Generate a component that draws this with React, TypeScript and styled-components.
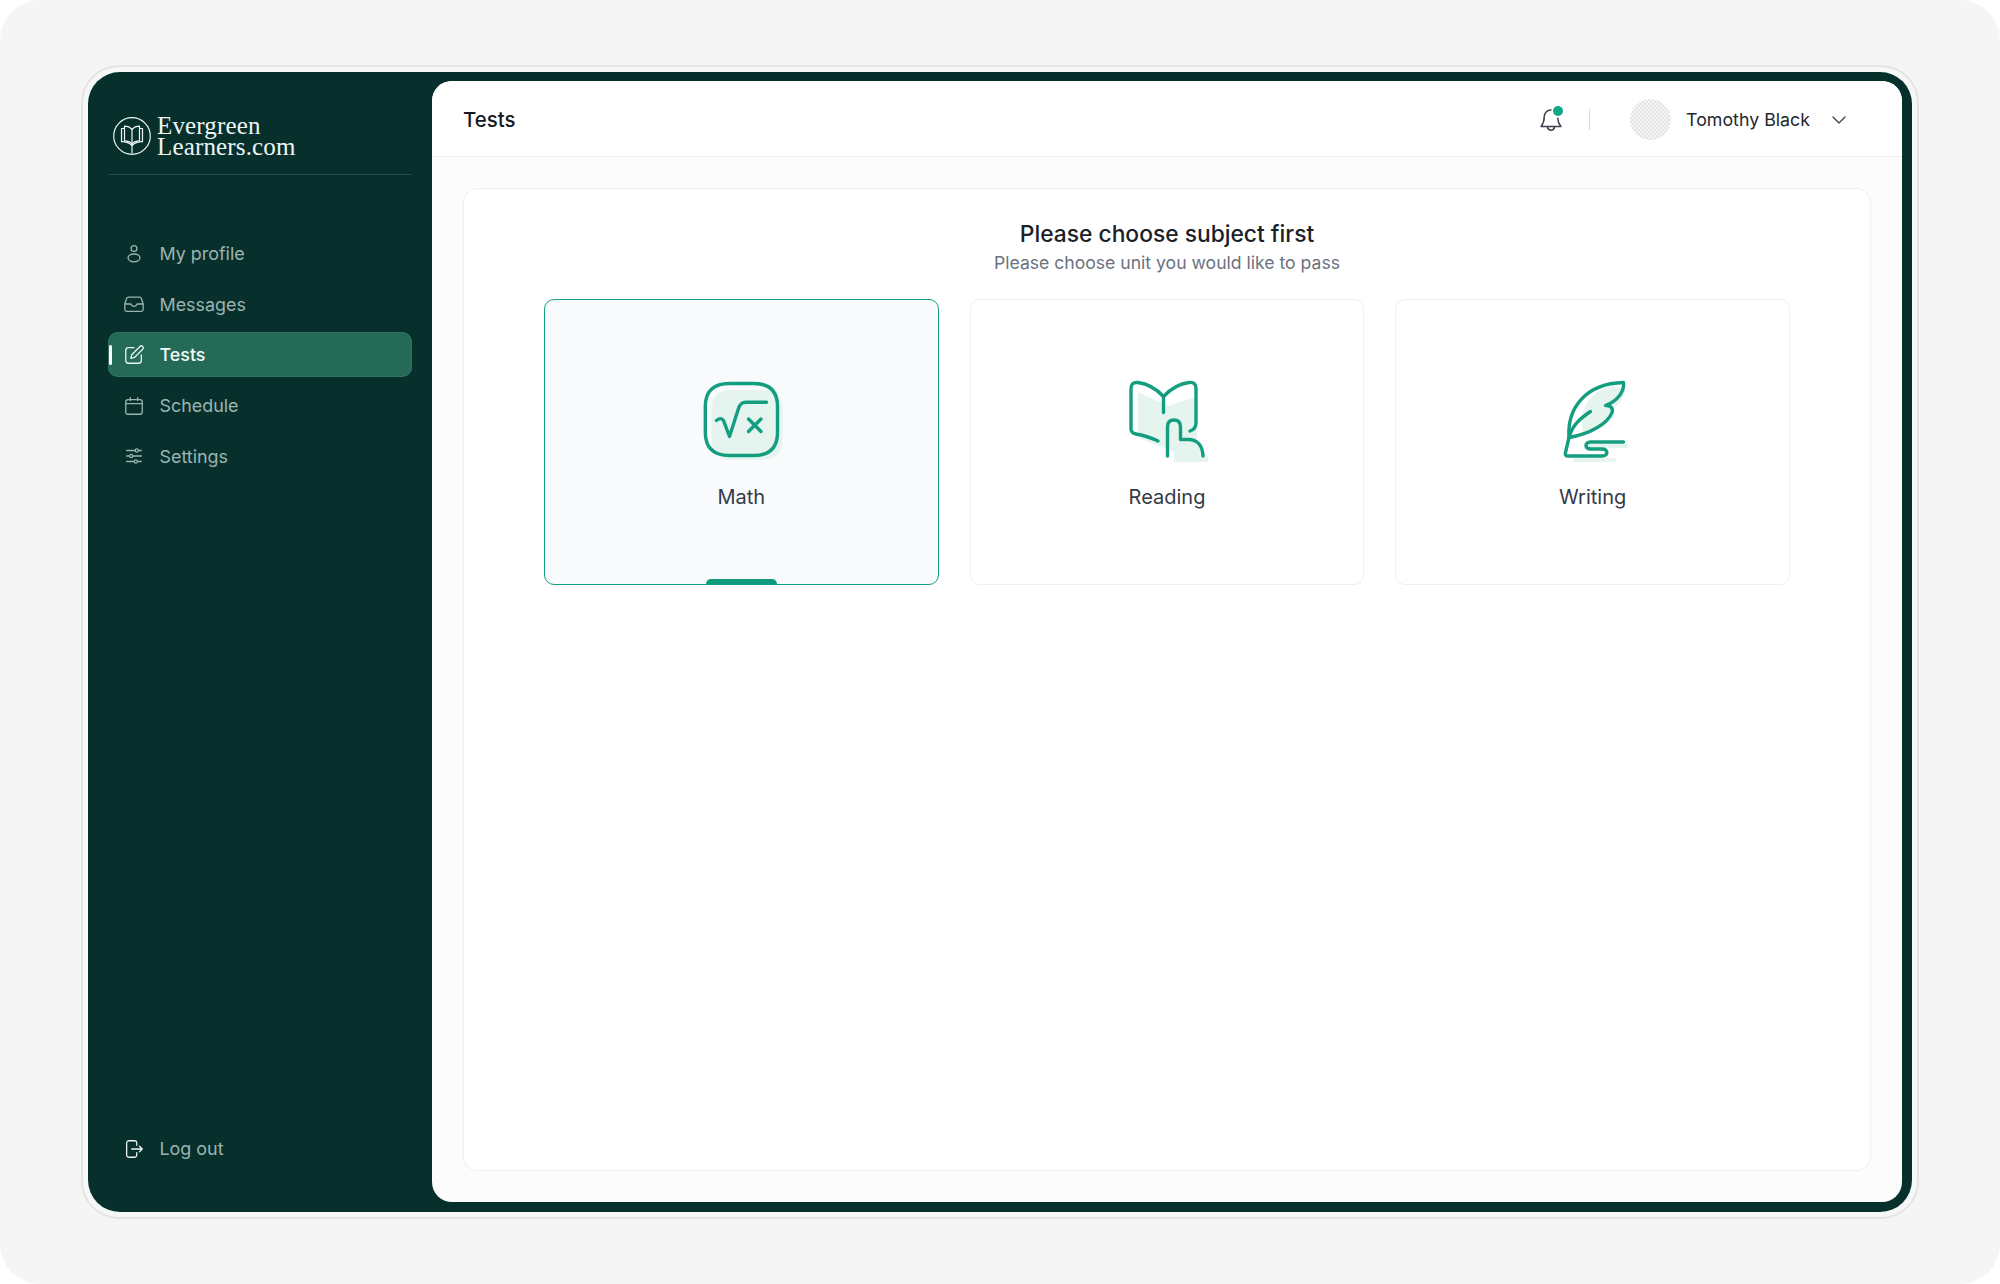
import React from "react";
import styled, { createGlobalStyle } from "styled-components";

const Global = createGlobalStyle`
  html, body { margin: 0; padding: 0; background: #ffffff; }
  * { box-sizing: border-box; }
  body { font-family: "Inter", "Liberation Sans", sans-serif; }
`;

const Page = styled.div`
  width: 2000px;
  height: 1284px;
  padding: 65px 81px;
  background: #f5f5f5;
  border-radius: 40px;
`;

const Frame = styled.div`
  height: 1154px;
  padding: 5px;
  border: 2px solid #e6e4e3;
  border-radius: 38px;
  background: #f6f7f7;
`;

const Shell = styled.div`
  display: flex;
  height: 100%;
  padding: 9px 10px 10px 0;
  background: #07302d;
  border-radius: 32px;
`;

const Sidebar = styled.aside`
  display: flex;
  flex-direction: column;
  flex: 0 0 344px;
  padding: 34px 20px 31px;
  width: 344px;
`;

const Brand = styled.div`
  display: flex;
  align-items: center;
  gap: 6px;
  padding: 0 5px 17px;
  border-bottom: 1px solid rgba(255, 255, 255, 0.13);
`;

const BrandName = styled.div`
  font-family: "Liberation Serif", serif;
  font-size: 25px;
  line-height: 21px;
  letter-spacing: 0.15px;
  color: #eef5f3;
`;

const NavList = styled.nav`
  display: flex;
  flex-direction: column;
  gap: 5.7px;
  margin-top: 56px;
`;

const NavItem = styled.div<{ $active?: boolean }>`
  position: relative;
  display: flex;
  align-items: center;
  gap: 14.5px;
  height: 45px;
  padding-left: 15px;
  border-radius: 10px;
  font-size: 17.9px;
  font-weight: ${(p) => (p.$active ? 500 : 400)};
  color: ${(p) => (p.$active ? "#f2fbf8" : "#9cb4b1")};
  background: ${(p) => (p.$active ? "#256a56" : "transparent")};
  box-shadow: ${(p) => (p.$active ? "inset 0 0 0 1px #2d7562" : "none")};
  svg { flex: none; color: ${(p) => (p.$active ? "#e6f5f0" : "#9cb4b1")}; }
`;

const ActiveBar = styled.span`
  position: absolute;
  left: 1px;
  top: 13px;
  width: 3px;
  height: 20px;
  background: #ffffff;
  border-radius: 2px;
`;

const LogOut = styled(NavItem)`
  margin-top: auto;
  svg { color: #eef5f3; }
`;

const Main = styled.main`
  flex: 1;
  display: flex;
  flex-direction: column;
  min-width: 0;
  background: #fcfcfd;
  border-radius: 20px;
  overflow: hidden;
`;

const Header = styled.header`
  display: flex;
  align-items: center;
  flex: 0 0 76px;
  padding: 2px 54px 0 31px;
  background: #ffffff;
  border-bottom: 1px solid #efefef;
`;

const PageTitle = styled.h1`
  flex: 1;
  margin: 0;
  font-size: 20.4px;
  font-weight: 500;
  color: #14181f;
`;

const BellWrap = styled.div`
  position: relative;
  width: 28px;
  height: 28px;
  color: #3c4250;
`;

const Dot = styled.span`
  position: absolute;
  top: 0;
  right: 2px;
  width: 10px;
  height: 10px;
  border-radius: 50%;
  background: #10a884;
`;

const VDivider = styled.span`
  width: 1px;
  height: 21px;
  margin: 0 40px 0 24.5px;
  background: #d8dadd;
`;

const Avatar = styled.div`
  width: 41px;
  height: 41px;
  border-radius: 50%;
  background-color: #f2f2f2;
  background-image: conic-gradient(#e4e4e4 25%, #f6f6f6 0 50%, #e4e4e4 0 75%, #f6f6f6 0);
  background-size: 4px 4px;
`;

const UserName = styled.span`
  margin-left: 15px;
  font-size: 17.8px;
  color: #23272f;
`;

const Chevron = styled.span`
  display: flex;
  margin-left: 20px;
  color: #4a4f5b;
`;

const Content = styled.div`
  flex: 1;
  padding: 32px 32px 32px;
  min-height: 0;
`;

const Card = styled.section`
  height: 100%;
  padding: 30px 80px 0;
  background: #ffffff;
  border-radius: 14px;
  box-shadow: 0 0 0 1px #f0f0f0, 0 1px 4px rgba(0, 0, 0, 0.02);
`;

const Heading = styled.h2`
  margin: 0;
  text-align: center;
  font-size: 22.8px;
  line-height: 30px;
  font-weight: 500;
  color: #1a1f29;
`;

const SubHeading = styled.p`
  margin: 1.5px 0 0;
  text-align: center;
  font-size: 17.6px;
  line-height: 24px;
  color: #6b7280;
`;

const Subjects = styled.div`
  display: grid;
  grid-template-columns: repeat(3, 1fr);
  gap: 31px;
  margin-top: 24.5px;
`;

const Subject = styled.div<{ $active?: boolean }>`
  position: relative;
  display: flex;
  flex-direction: column;
  align-items: center;
  height: 286px;
  padding-top: 78px;
  border-radius: 10px;
  border: 1px solid ${(p) => (p.$active ? "#12a182" : "#eeeff1")};
  background: ${(p) => (p.$active ? "#f8fafc" : "#ffffff")};
  font-size: 20px;
  color: #343a46;
  overflow: hidden;
`;

const SubjectLabel = styled.span`
  margin-top: 17px;
  line-height: 24px;
`;

const Tab = styled.span`
  position: absolute;
  bottom: 0;
  left: 50%;
  width: 71px;
  height: 5px;
  margin-left: -35.5px;
  background: #109a7d;
  border-radius: 5px 5px 0 0;
`;

const GREEN = "#129e7f";
const PALE = "#e6f4f0";

const Ico: React.FC<{ children: React.ReactNode; size?: number }> = ({ children, size = 22 }) => (
  <svg width={size} height={size} viewBox="0 0 24 24" fill="none" stroke="currentColor" strokeWidth="1.4" strokeLinecap="round" strokeLinejoin="round">
    {children}
  </svg>
);

const UserIcon = () => (
  <Ico>
    <circle cx="12" cy="6" r="3.200" />
    <path d="M12 12c-3.600 0-6.500 1.800-6.500 4.200S8.400 20.500 12 20.500s6.500-1.900 6.500-4.300S15.600 12 12 12z" />
  </Ico>
);
const InboxIcon = () => (
  <Ico>
    <path d="M6 4.500h12c1.200 0 1.800.8 2.200 1.800L22 12v6a2 2 0 0 1-2 2H4a2 2 0 0 1-2-2v-6l1.800-5.700C4.200 5.300 4.800 4.500 6 4.500z" />
    <path d="M2.500 12H8c.6 0 .9.4 1.100.9.4 1 1.400 1.600 2.900 1.600s2.500-.6 2.900-1.600c.2-.5.5-.9 1.100-.9h5.500" />
  </Ico>
);
const PenIcon = () => (
  <Ico>
    <path d="M12 4H6a3 3 0 0 0-3 3v11a3 3 0 0 0 3 3h11a3 3 0 0 0 3-3v-6" />
    <path d="M18.500 2.700a2.100 2.100 0 0 1 3 3L12.500 14.700l-4 1 1-4z" />
  </Ico>
);
const CalendarIcon = () => (
  <Ico>
    <rect x="3" y="5" width="18" height="16" rx="2.500" />
    <path d="M3 9.500h18M8 2.800V6M16 2.800V6" />
  </Ico>
);
const SlidersIcon = () => (
  <Ico>
    <path d="M4 6h9M17 6h3M4 12h3M11 12h9M4 18h8M16 18h4" />
    <circle cx="15" cy="6" r="1.700" />
    <circle cx="9" cy="12" r="1.700" />
    <circle cx="14" cy="18" r="1.700" />
  </Ico>
);
const LogOutIcon = () => (
  <Ico>
    <path d="M15 8V5.500A2.500 2.500 0 0 0 12.500 3H6.500A2.500 2.500 0 0 0 4 5.500v13A2.500 2.500 0 0 0 6.500 21h6a2.500 2.500 0 0 0 2.500-2.500V16" />
    <path d="M9.500 12H21M18 9l3 3-3 3" />
  </Ico>
);
const BellIcon = () => (
  <svg width="28" height="28" viewBox="0 0 24 24" fill="none" stroke="currentColor" strokeWidth="1.300" strokeLinecap="round" strokeLinejoin="round">
    <path d="M12 3.500c-3.400 0-5.800 2.600-5.800 5.800 0 4.500-1.200 6.300-2.700 8.200h17c-1.500-1.900-2.700-3.700-2.700-7" />
    <path d="M9 18c.3 1.700 1.500 2.700 3 2.700s2.700-1 3-2.700" />
  </svg>
);

const Logo = () => (
  <svg width="38" height="38" viewBox="0 0 38 38" fill="none" stroke="#eef5f3" strokeWidth="1.200" strokeLinecap="round" strokeLinejoin="round">
    <circle cx="19" cy="19" r="18.300" />
    <path d="M19 12.500c-2-2.200-4.800-3.300-7.500-3.300v14.600c3.200 0 5.600.9 7.500 3 1.900-2.100 4.300-3 7.500-3V9.200c-2.700 0-5.500 1.100-7.500 3.300z" />
    <path d="M19 12.500v14.300M11.500 11.500H8.500v13.200c3.500-.2 7 .6 10.500 3.800 3.500-3.200 7-4 10.500-3.800V11.500h-3" />
    <path d="M19 27v9" />
  </svg>
);

const MathIcon = () => (
  <svg width="90" height="90" viewBox="-3.500 0 90 90" fill="none">
    <path d="M32 12h30c14 0 21 7 21 21v27c0 15-7 22-21 22H32c-14 0-20-7-20-22V33c0-14 6-21 20-21z" fill={PALE} />
    <path d="M30 5.500h24c16 0 24 7.500 24 23v26c0 15.500-8 23-24 23H30c-16 0-24.200-7.500-24.200-23v-26c0-15.500 8.200-23 24.200-23z" stroke={GREEN} strokeWidth="3.400" />
    <path d="M17 42.500c3-2.500 5.500-2.500 7 0L30 58.500 38.500 32c1.500-5.500 3.500-7.700 8-7.700H67" stroke={GREEN} strokeWidth="3.400" strokeLinecap="round" strokeLinejoin="round" />
    <path d="M49 41l12.500 12.500M61.500 41L49 53.500" stroke={GREEN} strokeWidth="3.400" strokeLinecap="round" />
  </svg>
);

const ReadingIcon = () => (
  <svg width="90" height="90" viewBox="-3 0 90 90" fill="none">
    <path d="M13 14l31 14 28-10v49l11 11v6H49V74L13 60z" fill={PALE} />
    <path d="M33 63c-6-3-14-5.500-22-7-3.500-.7-5-2-5-5V11c0-5 2-7 7-6.500 8 1 18 6 25.500 14 7.500-8 17-13 25.500-14 5-.5 7 1.500 7 6.500V45c0 4-1.500 6.500-6 8" stroke={GREEN} strokeWidth="3.400" strokeLinecap="round" strokeLinejoin="round" />
    <path d="M38.500 18.500V34.500" stroke={GREEN} strokeWidth="3.400" strokeLinecap="round" />
    <path d="M42.500 78V49c0-4.500 2.500-7 6.500-7s6.500 2.500 6.500 7v12.500h8c8.500 0 14 5.500 14.500 16.500" stroke={GREEN} strokeWidth="3.400" strokeLinecap="round" strokeLinejoin="round" />
  </svg>
);

const WritingIcon = () => (
  <svg width="90" height="90" viewBox="-12.500 0 90 90" fill="none">
    <path d="M22 50c-3-16 4-36 30-42l13 3c-1 8-6 16-13 19 3 3 3 6 1 10-6 8-18 12-31 14z" fill={PALE} />
    <path d="M14 82h40M30 68h36" stroke={PALE} strokeWidth="4" strokeLinecap="round" />
    <path d="M8.500 59.500C6.500 30 25 5.500 63 4.500c1 9-6 18.500-18 23 5.500 0 8 3 6.500 7C47 46 29 56 8.500 59.500z" stroke={GREEN} strokeWidth="3.400" strokeLinejoin="round" />
    <path d="M8.500 59.500C12 47 19 41 30 33.500" stroke={GREEN} strokeWidth="3.400" strokeLinecap="round" />
    <path d="M63 64H30c-6 0-6 7 0 7h11.500c6.500 0 6.500 7 0 7H7c-2 0-2.500-1.500-2-3.500L8.500 59.500" stroke={GREEN} strokeWidth="3.400" strokeLinecap="round" strokeLinejoin="round" />
  </svg>
);

const navItems = [
  { label: "My profile", icon: <UserIcon /> },
  { label: "Messages", icon: <InboxIcon /> },
  { label: "Tests", icon: <PenIcon />, active: true },
  { label: "Schedule", icon: <CalendarIcon /> },
  { label: "Settings", icon: <SlidersIcon /> },
];

const subjects = [
  { label: "Math", icon: <MathIcon />, active: true },
  { label: "Reading", icon: <ReadingIcon /> },
  { label: "Writing", icon: <WritingIcon /> },
];

export default function App() {
  return (
    <>
      <Global />
      <Page>
        <Frame>
          <Shell>
            <Sidebar>
              <Brand>
                <Logo />
                <BrandName>
                  Evergreen
                  <br />
                  Learners.com
                </BrandName>
              </Brand>
              <NavList>
                {navItems.map((n) => (
                  <NavItem key={n.label} $active={n.active}>
                    {n.active && <ActiveBar />}
                    {n.icon}
                    {n.label}
                  </NavItem>
                ))}
              </NavList>
              <LogOut>
                <LogOutIcon />
                Log out
              </LogOut>
            </Sidebar>
            <Main>
              <Header>
                <PageTitle>Tests</PageTitle>
                <BellWrap>
                  <BellIcon />
                  <Dot />
                </BellWrap>
                <VDivider />
                <Avatar />
                <UserName>Tomothy Black</UserName>
                <Chevron>
                  <svg width="18" height="18" viewBox="0 0 18 18" fill="none" stroke="currentColor" strokeWidth="1.500" strokeLinecap="round" strokeLinejoin="round">
                    <path d="M3 6l6 6 6-6" />
                  </svg>
                </Chevron>
              </Header>
              <Content>
                <Card>
                  <Heading>Please choose subject first</Heading>
                  <SubHeading>Please choose unit you would like to pass</SubHeading>
                  <Subjects>
                    {subjects.map((s) => (
                      <Subject key={s.label} $active={s.active}>
                        {s.icon}
                        <SubjectLabel>{s.label}</SubjectLabel>
                        {s.active && <Tab />}
                      </Subject>
                    ))}
                  </Subjects>
                </Card>
              </Content>
            </Main>
          </Shell>
        </Frame>
      </Page>
    </>
  );
}
